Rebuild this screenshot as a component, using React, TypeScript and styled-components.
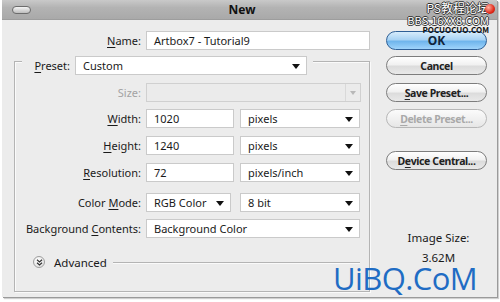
import React from 'react'
import styled, { createGlobalStyle, css } from 'styled-components'

const GlobalStyle = createGlobalStyle`
  html, body {
    margin: 0;
    padding: 0;
    background: #ffffff;
  }
  body {
    font-family: 'Noto Sans', 'Liberation Sans', sans-serif;
    font-size: 11px;
    color: #1a1a1a;
  }
`

const Page = styled.div`
  width: 500px;
  height: 302px;
  padding: 0 0 0 2px;
  box-sizing: border-box;
  position: relative;
  overflow: hidden;
`

const Dialog = styled.div`
  width: 495px;
  height: 297px;
  background: #ececec;
  box-shadow: 1px 1px 0 #9a9a9a, 2px 2px 1px #cfcfcf;
  display: flex;
  flex-direction: column;
  position: relative;
`

const TitleBar = styled.div`
  height: 20px;
  display: flex;
  align-items: center;
  padding: 0 10px;
  background: linear-gradient(#c9c9c9, #b3b3b3 40%, #a9a9a9);
  border-bottom: 1px solid #9d9d9d;
  box-sizing: border-box;
`

const Pill = styled.div`
  width: 17px;
  height: 6px;
  border: 1px solid #6c6c6c;
  border-radius: 5px;
  background: linear-gradient(#f4f4f4, #bdbdbd);
`

const Title = styled.div`
  flex: 1;
  text-align: center;
  font-weight: 700;
  font-size: 12px;
  padding-right: 34px;
  color: #111;
`

const Body = styled.div`
  flex: 1;
  display: flex;
  gap: 16px;
  padding: 11px 10px 0 12px;
`

const Form = styled.div`
  width: 356px;
  display: flex;
  flex-direction: column;
`

const Row = styled.div<{ $mt?: number }>`
  display: flex;
  align-items: center;
  height: 19px;
  margin-top: ${(p) => p.$mt ?? 0}px;
`

const Label = styled.label<{ $width: number; $disabled?: boolean }>`
  width: ${(p) => p.$width}px;
  margin-right: 5px;
  text-align: right;
  white-space: nowrap;
  color: ${(p) => (p.$disabled ? '#a3a3a3' : '#1a1a1a')};
  u {
    text-decoration-thickness: 1px;
    text-underline-offset: 2px;
  }
`

const fieldBox = css`
  height: 19px;
  box-sizing: border-box;
  border: 1px solid #cacaca;
  background: #ffffff;
  display: flex;
  align-items: center;
  padding: 0 6px 0 7px;
  white-space: nowrap;
  font-size: 11px;
`

const Input = styled.div<{ $w: number }>`
  ${fieldBox};
  width: ${(p) => p.$w}px;
`

const Select = styled.div<{ $w: number; $ml?: number; $disabled?: boolean }>`
  ${fieldBox};
  width: ${(p) => p.$w}px;
  margin-left: ${(p) => p.$ml ?? 0}px;
  justify-content: space-between;
  ${(p) =>
    p.$disabled &&
    css`
      background: #ebebeb;
      border-color: #d0d0d0;
      padding-right: 0;
    `}
`

const Arrow = styled.span`
  width: 0;
  height: 0;
  border-left: 4px solid transparent;
  border-right: 4px solid transparent;
  border-top: 5px solid #111;
  margin-top: 1px;
`

const DisabledArrow = styled.span`
  width: 14px;
  height: 17px;
  border-left: 1px solid #d9d9d9;
  display: flex;
  align-items: center;
  justify-content: center;
  &::after {
    content: '';
    border-left: 3px solid transparent;
    border-right: 3px solid transparent;
    border-top: 4px solid #b8b8b8;
  }
`

const GroupBox = styled.div`
  margin-top: 11px;
  height: 231px;
  box-sizing: border-box;
  border: 1px solid #b4b4b4;
  box-shadow: inset 1px 1px 0 #fafafa, 1px 1px 0 #fafafa;
  display: flex;
  flex-direction: column;
`

const Legend = styled.div`
  align-self: flex-start;
  margin: -6px 0 0 7px;
  padding: 0 6px 0 12px;
  background: #ececec;
  display: flex;
  align-items: center;
  height: 19px;
  gap: 5px;
`

const AdvancedRow = styled.div`
  display: flex;
  align-items: center;
  height: 18px;
  margin-top: 15px;
  padding-left: 18px;
  padding-right: 9px;
  font-size: 11.5px;
`

const Chevron = styled.span`
  width: 10px;
  height: 10px;
  border-radius: 50%;
  border: 1px solid #9e9e9e;
  background: radial-gradient(circle at 40% 35%, #ffffff, #d9d9d9);
  display: flex;
  align-items: center;
  justify-content: center;
  margin-right: 9px;
`

const Rule = styled.span`
  flex: 1;
  height: 1px;
  background: #b4b4b4;
  box-shadow: 0 1px 0 #fafafa;
  margin-left: 6px;
`

const Side = styled.div`
  width: 101px;
  display: flex;
  flex-direction: column;
  align-items: stretch;
`

const Button = styled.div<{ $primary?: boolean; $disabled?: boolean; $mt?: number }>`
  height: 19px;
  box-sizing: border-box;
  margin-top: ${(p) => p.$mt ?? 0}px;
  border-radius: 10px;
  display: flex;
  align-items: center;
  justify-content: center;
  font-weight: 700;
  font-size: 10.5px;
  letter-spacing: -0.4px;
  white-space: nowrap;
  border: 1px solid #7d7d7d;
  background: linear-gradient(#ffffff, #f1f1f1 45%, #dcdcdc 55%, #e9e9e9);
  color: #222;
  u {
    text-underline-offset: 2px;
  }
  ${(p) =>
    p.$primary &&
    css`
      border-color: #2e5f96;
      background: linear-gradient(#d6ecfc, #a9d3f4 45%, #6fb5ec 55%, #9fd4fb);
      color: #10243a;
      font-size: 12px;
      letter-spacing: 0;
    `}
  ${(p) =>
    p.$disabled &&
    css`
      border-color: #b7b7b7;
      color: #a9a9a9;
      background: linear-gradient(#fbfbfb, #f1f1f1 50%, #e6e6e6);
    `}
`

const SizeInfo = styled.div`
  margin-top: 61px;
  display: flex;
  flex-direction: column;
  align-items: center;
  gap: 6px;
  padding-left: 4px;
  font-size: 11.5px;
  line-height: 14px;
`

const Watermark = styled.div`
  position: absolute;
  left: 331px;
  top: 259px;
  font-family: 'Open Sans', 'Noto Sans', sans-serif;
  font-size: 31px;
  letter-spacing: -0.6px;
  color: #1f6cc4;
  line-height: 38px;
`

const ForumMark = styled.div`
  position: absolute;
  right: 8px;
  top: 1px;
  display: flex;
  flex-direction: column;
  align-items: flex-end;
  color: #fff;
  text-shadow: -1px 0 #333, 1px 0 #333, 0 -1px #333, 0 1px #333;
`

const ForumLine = styled.span<{ $size: number; $lh: number; $dark?: boolean }>`
  font-size: ${(p) => p.$size}px;
  line-height: ${(p) => p.$lh}px;
  font-family: 'Noto Sans CJK SC', 'DejaVu Sans Mono', monospace;
  ${(p) =>
    p.$dark &&
    css`
      color: #111;
      text-shadow: none;
      font-weight: 700;
    `}
`

const RedDot = styled.span`
  position: absolute;
  right: -6px;
  top: 3px;
  width: 10px;
  height: 10px;
  border-radius: 50%;
  background: radial-gradient(circle at 35% 35%, #ffb0a0, #e22a1a 60%, #9e1208);
`

const ChevronIcon = () => (
  <svg width="7" height="7" viewBox="0 0 7 7">
    <path d="M1 0.8 L3.5 3 L6 0.8 M1 3.8 L3.5 6 L6 3.8" fill="none" stroke="#333" strokeWidth="1.2" />
  </svg>
)

export default function App() {
  return (
    <Page>
      <GlobalStyle />
      <Dialog>
        <TitleBar>
          <Pill />
          <Title>New</Title>
        </TitleBar>
        <Body>
          <Form>
            <Row>
              <Label $width={127}>
                <u>N</u>ame:
              </Label>
              <Input $w={224}>Artbox7 - Tutorial9</Input>
            </Row>
            <GroupBox>
              <Legend>
                <Label as="span" $width={36} style={{ marginRight: 0 }}>
                  <u>P</u>reset:
                </Label>
                <Select $w={232}>
                  Custom
                  <Arrow />
                </Select>
              </Legend>
              <Row $mt={8}>
                <Label $width={126} $disabled>
                  Size:
                </Label>
                <Select $w={215} $disabled>
                  <span />
                  <DisabledArrow />
                </Select>
              </Row>
              <Row $mt={7}>
                <Label $width={126}>
                  <u>W</u>idth:
                </Label>
                <Input $w={88}>1020</Input>
                <Select $w={120} $ml={6}>
                  pixels
                  <Arrow />
                </Select>
              </Row>
              <Row $mt={8}>
                <Label $width={126}>
                  <u>H</u>eight:
                </Label>
                <Input $w={88}>1240</Input>
                <Select $w={120} $ml={6}>
                  pixels
                  <Arrow />
                </Select>
              </Row>
              <Row $mt={8}>
                <Label $width={126}>
                  <u>R</u>esolution:
                </Label>
                <Input $w={88}>72</Input>
                <Select $w={120} $ml={6}>
                  pixels/inch
                  <Arrow />
                </Select>
              </Row>
              <Row $mt={11}>
                <Label $width={126}>
                  Color <u>M</u>ode:
                </Label>
                <Select $w={85}>
                  RGB Color
                  <Arrow />
                </Select>
                <Select $w={120} $ml={9}>
                  8 bit
                  <Arrow />
                </Select>
              </Row>
              <Row $mt={7}>
                <Label $width={126}>
                  Background <u>C</u>ontents:
                </Label>
                <Select $w={214}>
                  Background Color
                  <Arrow />
                </Select>
              </Row>
              <AdvancedRow>
                <Chevron>
                  <ChevronIcon />
                </Chevron>
                Advanced
                <Rule />
              </AdvancedRow>
            </GroupBox>
          </Form>
          <Side>
            <Button $primary>OK</Button>
            <Button $mt={6}>Cancel</Button>
            <Button $mt={8}>
              <u>S</u>ave Preset...
            </Button>
            <Button $mt={7} $disabled>
              <u>D</u>elete Preset...
            </Button>
            <Button $mt={23}>
              D<u>e</u>vice Central...
            </Button>
            <SizeInfo>
              <span>Image Size:</span>
              <span>3.62M</span>
            </SizeInfo>
          </Side>
        </Body>
        <ForumMark>
          <ForumLine $size={12} $lh={14}>PS教程论坛</ForumLine>
          <ForumLine $size={11} $lh={11}>BBS.16XX8.COM</ForumLine>
          <ForumLine $size={8} $lh={8} $dark>
            POCUOCUO.COM
          </ForumLine>
          <RedDot />
        </ForumMark>
        <Watermark>UiBQ.CoM</Watermark>
      </Dialog>
    </Page>
  )
}
